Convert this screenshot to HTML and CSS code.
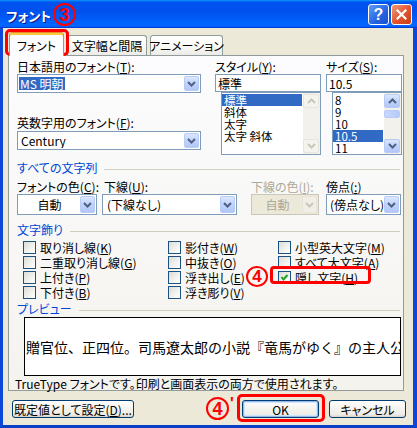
FILE: index.html
```html
<!DOCTYPE html>
<html lang="ja">
<head>
<meta charset="utf-8">
<title>フォント</title>
<link rel="stylesheet" href="styles.css">
</head>
<body>
<div class="window">
  <div class="titlebar">
    <span class="title-text">フォント</span>
    <span class="mark mark-title">3</span>
    <div class="title-controls">
      <button class="tb-btn tb-help">?</button>
      <button class="tb-btn tb-close"><svg width="11" height="11" viewBox="0 0 11 11"><path d="M1.5 1.5 L9.5 9.5 M9.5 1.5 L1.5 9.5" stroke="#fff" stroke-width="2.2" stroke-linecap="square"/></svg></button>
    </div>
  </div>
  <div class="frame">
    <div class="tabs">
      <div class="tab tab-active">フォント</div>
      <div class="tab tab-2">文字幅と間隔</div>
      <div class="tab tab-3">アニメーション</div>
    </div>
    <div class="panel">
      <div class="top-row">
        <div class="col-font">
          <div class="label">日本語用のフォント(<u>T</u>):</div>
          <div class="combo combo-tall19 gap1">
            <span class="combo-text"><span class="sel">MS 明朝</span></span>
            <span class="dd"><svg width="9" height="6" viewBox="0 0 9 6"><path d="M1 1 L4.5 4.5 L8 1" fill="none" stroke="#4D6185" stroke-width="2"/></svg></span>
          </div>
          <div class="label label-gap">英数字用のフォント(<u>F</u>):</div>
          <div class="combo combo-tall19 gap2">
            <span class="combo-text pad">Century</span>
            <span class="dd"><svg width="9" height="6" viewBox="0 0 9 6"><path d="M1 1 L4.5 4.5 L8 1" fill="none" stroke="#4D6185" stroke-width="2"/></svg></span>
          </div>
        </div>
        <div class="col-style">
          <div class="label">スタイル(<u>Y</u>):</div>
          <div class="textbox">標準</div>
          <div class="listbox list-style">
            <div class="items">
              <div class="item selected">標準</div>
              <div class="item">斜体</div>
              <div class="item">太字</div>
              <div class="item">太字 斜体</div>
            </div>
            <div class="vscroll disabled">
              <div class="sb-btn"><svg width="9" height="6" viewBox="0 0 9 6"><path d="M1 5 L4.5 1.5 L8 5" fill="none" stroke="#C9C7BA" stroke-width="2"/></svg></div>
              <div class="sb-track"></div>
              <div class="sb-btn"><svg width="9" height="6" viewBox="0 0 9 6"><path d="M1 1 L4.5 4.5 L8 1" fill="none" stroke="#C9C7BA" stroke-width="2"/></svg></div>
            </div>
          </div>
        </div>
        <div class="col-size">
          <div class="label">サイズ(<u>S</u>):</div>
          <div class="textbox">10.5</div>
          <div class="listbox list-size">
            <div class="items">
              <div class="item">8</div>
              <div class="item">9</div>
              <div class="item">10</div>
              <div class="item selected">10.5</div>
              <div class="item">11</div>
            </div>
            <div class="vscroll">
              <div class="sb-btn"><svg width="9" height="6" viewBox="0 0 9 6"><path d="M1 5 L4.5 1.5 L8 5" fill="none" stroke="#4D6185" stroke-width="2"/></svg></div>
              <div class="sb-track"><div class="sb-thumb"></div></div>
              <div class="sb-btn"><svg width="9" height="6" viewBox="0 0 9 6"><path d="M1 1 L4.5 4.5 L8 1" fill="none" stroke="#4D6185" stroke-width="2"/></svg></div>
            </div>
          </div>
        </div>
      </div>

      <div class="group g1">すべての文字列</div>
      <div class="row-labels">
        <div class="cell c1">フォントの色(<u>C</u>):</div>
        <div class="cell c2">下線(<u>U</u>):</div>
        <div class="cell c3 disabled-text">下線の色(<u>I</u>):</div>
        <div class="cell c4">傍点(<u>:</u>)</div>
      </div>
      <div class="row-combos">
        <div class="combo w-color"><span class="combo-text center">自動</span><span class="dd"><svg width="9" height="6" viewBox="0 0 9 6"><path d="M1 1 L4.5 4.5 L8 1" fill="none" stroke="#4D6185" stroke-width="2"/></svg></span></div>
        <div class="combo w-under"><span class="combo-text pad4">(下線なし)</span><span class="dd"><svg width="9" height="6" viewBox="0 0 9 6"><path d="M1 1 L4.5 4.5 L8 1" fill="none" stroke="#4D6185" stroke-width="2"/></svg></span></div>
        <div class="combo w-ucolor disabled"><span class="combo-text center">自動</span><span class="dd"><svg width="9" height="6" viewBox="0 0 9 6"><path d="M1 1 L4.5 4.5 L8 1" fill="none" stroke="#C9C7BA" stroke-width="2"/></svg></span></div>
        <div class="combo w-dot"><span class="combo-text pad2">(傍点なし)</span><span class="dd"><svg width="9" height="6" viewBox="0 0 9 6"><path d="M1 1 L4.5 4.5 L8 1" fill="none" stroke="#4D6185" stroke-width="2"/></svg></span></div>
      </div>

      <div class="group g2">文字飾り</div>
      <div class="checks">
        <label class="check"><span class="box"></span>取り消し線(<u>K</u>)</label>
        <label class="check"><span class="box"></span>影付き(<u>W</u>)</label>
        <label class="check"><span class="box"></span>小型英大文字(<u>M</u>)</label>
        <label class="check"><span class="box"></span>二重取り消し線(<u>G</u>)</label>
        <label class="check"><span class="box"></span>中抜き(<u>O</u>)</label>
        <label class="check"><span class="box"></span>すべて大文字(<u>A</u>)</label>
        <label class="check"><span class="box"></span>上付き(<u>P</u>)</label>
        <label class="check"><span class="box"></span>浮き出し(<u>E</u>)</label>
        <label class="check"><span class="box"><svg width="11" height="11" viewBox="0 0 11 11"><path d="M2.5 5 L4.5 7.5 L8.5 3" fill="none" stroke="#21A121" stroke-width="2"/></svg></span>隠し文字(<u>H</u>)</label>
        <label class="check"><span class="box"></span>下付き(<u>B</u>)</label>
        <label class="check"><span class="box"></span>浮き彫り(<u>V</u>)</label>
      </div>

      <div class="group g3">プレビュー</div>
      <div class="preview"><span>贈官位、正四位。司馬遼太郎の小説『竜馬がゆく』の主人公</span></div>
      <div class="note">TrueType フォントです。印刷と画面表示の両方で使用されます。</div>
    </div>
    <div class="buttons">
      <button class="btn btn-default-set">既定値として設定(<u>D</u>)...</button>
      <button class="btn btn-ok">OK</button>
      <button class="btn btn-cancel">キャンセル</button>
    </div>
  </div>

  <div class="redbox rb-tab"></div>
  <div class="redbox rb-hidden"></div>
  <div class="redbox rb-ok"></div>
  <span class="mark mark-4">4</span>
  <span class="mark-wrap mark-4p"><span class="mark">4</span><span class="prime">'</span></span>
</div>
</body>
</html>
```

FILE: styles.css
```css
* { box-sizing: border-box; }
html, body { margin: 0; padding: 0; }
body {
  width: 417px;
  height: 428px;
  overflow: hidden;
  background: #fff;
  font-family: "Noto Sans CJK JP", "Noto Sans", sans-serif;
  font-size: 12px;
  line-height: 13px;
  color: #000;
  font-feature-settings: "palt";
}
u { text-decoration: underline; text-underline-offset: 1px; }
button { font: inherit; font-feature-settings: "palt"; padding: 0; margin: 0; color: #000; }

.window {
  position: relative;
  width: 417px;
  height: 428px;
  display: flex;
  flex-direction: column;
}

/* title bar */
.titlebar {
  height: 28px;
  flex: none;
  display: flex;
  align-items: center;
  padding: 0 5px 0 6px;
  background: linear-gradient(180deg, #0997ff, #0053ee 8%, #0050ee 40%, #0066ff 88%, #0066ff 93%, #005bff 95%, #003dd7 96%, #003dd7);
  color: #fff;
}
.title-text {
  font-weight: bold;
  font-size: 13px;
  padding-top: 3px;
  text-shadow: 1px 1px #0f1089;
}
.title-controls {
  margin-left: auto;
  display: flex;
  gap: 2px;
  padding-top: 1px;
}
.tb-btn {
  width: 21px;
  height: 21px;
  border: 1px solid #fff;
  border-radius: 3px;
  display: flex;
  align-items: center;
  justify-content: center;
  color: #fff;
}
.tb-help {
  background: linear-gradient(135deg, #5d9cf9, #2663e0 60%, #1a52d0);
  font-family: "Liberation Sans", sans-serif;
  font-weight: bold;
  font-size: 16px;
  line-height: 1;
}
.tb-close {
  background: linear-gradient(135deg, #f29a7a, #e0532d 55%, #c93d14);
}

/* annotations */
.mark {
  display: inline-flex;
  align-items: center;
  justify-content: center;
  width: 23px;
  height: 23px;
  border: 2px solid #ff0000;
  border-radius: 50%;
  color: #ff0000;
  font-family: "Liberation Sans", sans-serif;
  font-weight: bold;
  font-size: 18px;
  line-height: 1;
}
.mark-title { margin-left: 2px; margin-top: 1px; }
.mark-4 { position: absolute; left: 246px; top: 266px; width: 22px; height: 21px; font-size: 17px; }
.mark-wrap { position: absolute; display: flex; align-items: flex-start; }
.mark-4p { left: 206px; top: 397px; }
.prime {
  color: #ff0000;
  font-family: "Liberation Sans", sans-serif;
  font-weight: bold;
  font-size: 16px;
  line-height: 14px;
  margin-left: 1px;
}
.redbox {
  position: absolute;
  border: 3px solid #ff0000;
  border-radius: 5px;
}
.rb-tab { left: 5px; top: 29px; width: 64px; height: 27px; }
.rb-hidden { left: 270px; top: 266px; width: 101px; height: 18px; border-radius: 4px; }
.rb-ok { left: 237px; top: 394px; width: 88px; height: 28px; }

/* frame */
.frame {
  flex: 1;
  display: flex;
  flex-direction: column;
  background: #ECE9D8;
  border-left: 3px solid #0b47d9;
  border-right: 4px solid #0b47d9;
  border-bottom: 3px solid #0a3fc8;
  padding-top: 4px;
}

.tabs {
  height: 23px;
  display: flex;
  align-items: flex-end;
  margin-left: 6px;
}
.tab {
  height: 20px;
  border: 1px solid #919B9C;
  border-bottom: none;
  border-radius: 3px 3px 0 0;
  background: linear-gradient(#fff, #fdfdfb 40%, #ecebe6);
  display: flex;
  align-items: center;
  justify-content: center;
  white-space: nowrap;
}
.tab-active {
  width: 55px;
  height: 24px;
  margin-bottom: -1px;
  position: relative;
  z-index: 1;
  background: #fcfcfe;
  border-top: 1px solid #e68b2c;
  box-shadow: inset 0 2px #ffc73c;
  padding-top: 2px;
}
.tab-2 { width: 80px; margin-left: 3px; }
.tab-3 { width: 73px; margin-left: 3px; }

.panel {
  margin-left: 5px;
  width: 396px;
  height: 336px;
  border: 1px solid #919B9C;
  background: linear-gradient(#fcfcfe, #f4f3ee);
  padding: 4px 1px 0 8px;
  display: flex;
  flex-direction: column;
}

.label { height: 13px; white-space: nowrap; }
.label-gap { margin-top: 23px; }

.top-row { display: flex; height: 95px; flex: none; }
.col-font { width: 184px; }
.col-style { width: 106px; margin-left: 14px; }
.col-size { width: 76px; margin-left: 5px; }

.combo {
  display: flex;
  border: 1px solid #7F9DB9;
  background: #fff;
  padding: 1px;
}
.combo-tall19 { height: 19px; }
.gap1 { margin-top: 1px; }
.gap2 { margin-top: 2px; }
.combo-text {
  flex: 1;
  display: flex;
  align-items: center;
  white-space: nowrap;
  overflow: hidden;
}
.combo-text.pad { padding-left: 2px; }
.combo-text.pad4 { padding-left: 3px; }
.combo-text.pad2 { padding-left: 2px; }
.combo-text.center { justify-content: center; }
.sel {
  background: #316AC5;
  color: #fff;
  padding: 0 1px;
  line-height: 13px;
}
.dd {
  width: 15px;
  flex: none;
  display: flex;
  align-items: center;
  justify-content: center;
  border: 1px solid #b8cbf6;
  border-radius: 2px;
  background: linear-gradient(#dce7fe, #c0d3fb 50%, #b2c7f6);
}
.combo.disabled { background: #ECE9D8; border-color: #C9C7BA; color: #ACA899; }
.combo.disabled .dd { background: #F0EEE6; border-color: #E6E4DA; }

.textbox {
  margin-top: 1px;
  height: 18px;
  border: 1px solid #7F9DB9;
  background: #fff;
  padding-left: 2px;
  display: flex;
  align-items: center;
}

.listbox {
  margin-left: 6px;
  height: 63px;
  border: 1px solid #7F9DB9;
  background: #fff;
  display: flex;
}
.list-style { width: 100px; }
.list-size { width: 70px; }
.items {
  flex: 1;
  padding: 1px 1px 0 0;
  overflow: hidden;
}
.item {
  height: 12px;
  line-height: 12px;
  font-size: 11.5px;
  padding-left: 2px;
  white-space: nowrap;
}
.item.selected { background: #316AC5; color: #fff; }

.vscroll {
  width: 17px;
  flex: none;
  display: flex;
  flex-direction: column;
  padding: 1px 1px 1px 0;
  background: #f3f1ec;
}
.sb-btn {
  height: 14px;
  flex: none;
  display: flex;
  align-items: center;
  justify-content: center;
  border: 1px solid #b8cbf6;
  border-radius: 2px;
  background: linear-gradient(#dce7fe, #c0d3fb 50%, #b2c7f6);
}
.vscroll.disabled .sb-btn {
  background: #f4f3ee;
  border-color: #e8e6dc;
}
.sb-track { flex: 1; padding-top: 2px; }
.sb-thumb {
  height: 8px;
  border: 1px solid #b8cbf6;
  border-radius: 2px;
  background: linear-gradient(90deg, #c9d9fc, #b5caf7);
}

/* groups */
.group {
  display: flex;
  align-items: flex-start;
  height: 13px;
  color: #0046D5;
  white-space: nowrap;
  flex: none;
}
.group::after {
  content: "";
  flex: 1;
  height: 1px;
  background: #D0D0BF;
  margin: 8px 2px 0 7px;
}
.g1 { margin-top: 6px; }
.g2 { margin-top: 8px; }
.g3 { margin-top: 1px; }

.row-labels {
  margin-top: 6px;
  height: 13px;
  display: flex;
  white-space: nowrap;
  flex: none;
}
.cell.c1 { width: 85px; }
.cell.c2 { width: 149px; padding-left: 2px; }
.cell.c3 { width: 75px; }
.disabled-text { color: #ACA899; }

.row-combos {
  margin-top: 1px;
  height: 21px;
  display: flex;
  flex: none;
}
.w-color { width: 80px; }
.w-under { width: 135px; margin-left: 5px; }
.w-ucolor { width: 68px; margin-left: 14px; }
.w-dot { width: 75px; margin-left: 7px; }

/* checkboxes */
.checks {
  margin-top: 5px;
  padding-left: 6px;
  display: grid;
  grid-template-columns: 145px 110px 1fr;
  grid-auto-rows: 15px;
  flex: none;
  height: 60px;
}
.check {
  display: flex;
  align-items: flex-start;
  white-space: nowrap;
  line-height: 13px;
}
.box {
  width: 13px;
  height: 13px;
  flex: none;
  border: 1px solid #1C5180;
  background: linear-gradient(135deg, #dcdcd7, #f2f2ef 60%, #fff);
  margin-right: 4px;
  display: flex;
  align-items: center;
  justify-content: center;
}

/* preview */
.preview {
  margin-top: 2px;
  margin-left: 7px;
  width: 377px;
  height: 59px;
  flex: none;
  border: 1px solid #000;
  background: #fff;
  display: flex;
  align-items: center;
  overflow: hidden;
  white-space: nowrap;
  padding-left: 1px;
  font-size: 14px;
  line-height: 16px;
  font-feature-settings: normal;
}
.note {
  margin-top: 1px;
  margin-left: -2px;
  height: 13px;
  white-space: nowrap;
}

/* buttons */
.buttons {
  margin-top: 9px;
  display: flex;
  padding-left: 9px;
  padding-right: 7px;
}
.btn {
  height: 18px;
  border: 1px solid #003C74;
  border-radius: 3px;
  background: linear-gradient(180deg, #fff, #f4f3ee 50%, #ecebe6 86%, #d6d0c5);
  display: flex;
  align-items: center;
  justify-content: center;
  white-space: nowrap;
  line-height: 13px;
}
.btn-default-set { width: 122px; }
.btn-ok {
  width: 77px;
  margin-left: auto;
  box-shadow: inset 0 0 0 1px #98b8ea, inset 0 0 0 2px #cee7ff;
}
.btn-cancel { width: 77px; margin-left: 10px; }
```
